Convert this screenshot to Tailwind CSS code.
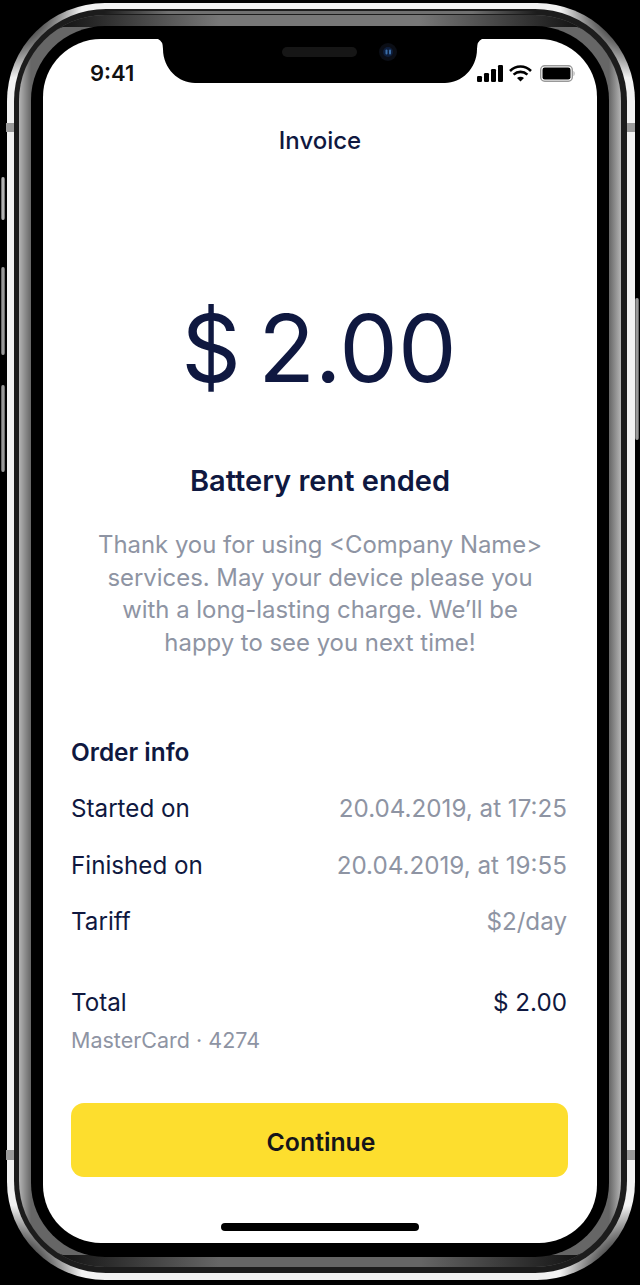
<!DOCTYPE html>
<html lang="en">
<head>
  <meta charset="UTF-8"/>
  <meta name="viewport" content="width=device-width, initial-scale=1.0"/>
  <title>Invoice</title>
  <script src="https://cdn.jsdelivr.net/npm/@tailwindcss/browser@4"></script>
</head>
<body class="bg-black">
  <div class="relative w-[640px] h-[1285px] bg-black pt-[3px] pb-[5px] pl-[7px] pr-[5px] overflow-hidden font-['Inter',sans-serif]">
    <!-- side buttons -->
    <div class="absolute left-[1px] top-[177px] w-[4px] h-[43px] rounded-[2px] bg-[linear-gradient(to_right,#555,#d0d0d0,#555)]"></div>
    <div class="absolute left-[1px] top-[267px] w-[4px] h-[88px] rounded-[2px] bg-[linear-gradient(to_right,#555,#b0b0b0,#555)]"></div>
    <div class="absolute left-[1px] top-[385px] w-[4px] h-[87px] rounded-[2px] bg-[linear-gradient(to_right,#555,#b0b0b0,#555)]"></div>
    <div class="absolute right-[1px] top-[298px] w-[4px] h-[142px] rounded-[2px] bg-[linear-gradient(to_right,#555,#b0b0b0,#555)]"></div>

    <!-- steel band -->
    <div class="relative w-full h-full rounded-[98px] bg-[radial-gradient(circle_at_0_0,#000_22px,transparent_75px),radial-gradient(circle_at_100%_0,#000_22px,transparent_75px),radial-gradient(circle_at_0_100%,#000_22px,transparent_75px),radial-gradient(circle_at_100%_100%,#000_22px,transparent_75px),linear-gradient(#f2f2f2,#f2f2f2)] pt-[6px] pb-[7px] pl-[7px] pr-[8px]">
      <div class="absolute left-[-1px] top-[120px] w-[8px] h-[9px] bg-[#9a9a9a]"></div>
      <div class="absolute right-0 top-[120px] w-[8px] h-[9px] bg-[#9a9a9a]"></div>
      <div class="absolute left-[-1px] top-[1147px] w-[8px] h-[10px] bg-[#9a9a9a]"></div>
      <div class="absolute right-0 top-[1147px] w-[8px] h-[10px] bg-[#9a9a9a]"></div>

      <div class="relative w-full h-full rounded-[92px] bg-[#1c1c1c] pt-[6px] pb-[6px] pl-[5px] pr-[6px]">
        <!-- thin highlight line along the top -->
        <div class="absolute left-[90px] right-[90px] top-[2px] h-[3px] bg-[linear-gradient(to_right,#1c1c1c,#707070_15%,#707070_85%,#1c1c1c)]"></div>

        <!-- inner grey band -->
        <div class="relative w-full h-full rounded-[86px] overflow-hidden bg-[linear-gradient(to_right,#b4b4b4_0,#666_12px,#666_590px,#b4b4b4_602px)] pt-[11px] pb-[10px] px-[12px]">
          <div class="absolute left-0 top-0 w-full h-[30px] [clip-path:polygon(0_28px,44px_12px,558px_12px,602px_28px,602px_0,0_0)] bg-[linear-gradient(to_right,#141414_44px,#777_200px,#777_400px,#141414_558px)]"></div>
          <div class="absolute left-0 bottom-0 w-full h-[30px] [clip-path:polygon(0_2px,44px_18px,558px_18px,602px_2px,602px_30px,0_30px)] bg-[linear-gradient(to_right,#141414_44px,#666_200px,#666_400px,#141414_558px)]"></div>

          <div class="relative w-full h-full rounded-[74px] bg-black pt-[13px] pb-[14px] px-[12px]">

            <!-- screen -->
            <div class="relative flex flex-col w-full h-full rounded-[58px] bg-white overflow-hidden text-[#0f1840]">
              <!-- notch -->
              <svg class="absolute left-[115px] top-0" width="324" height="44" viewBox="0 0 324 44">
                <path d="M0 0 H324 Q319 2 319 10 C319 30 303 44 287 44 H37 C21 44 5 30 5 10 Q5 2 0 0 Z" fill="#000"/>
                <rect x="124" y="8" width="75" height="10" rx="5" fill="#161616"/>
                <circle cx="230" cy="13" r="9" fill="#0b0e16"/>
                <circle cx="230" cy="13" r="5" fill="#0e1e3c"/>
                <rect x="227.5" y="10.5" width="2" height="5" rx="1" fill="#3b6ea8"/>
                <rect x="231" y="10.5" width="2" height="5" rx="1" fill="#3b6ea8"/>
              </svg>

              <!-- status bar -->
              <div class="flex items-center justify-between h-[68px] pl-[47px] pr-[22px]">
                <span class="text-[22px] font-semibold text-[#111] leading-none">9:41</span>
                <div class="flex items-center">
                  <svg width="26" height="17" viewBox="0 0 26 17" fill="#000">
                    <rect x="0" y="11" width="5" height="6" rx="1.2"/>
                    <rect x="7" y="8" width="5" height="9" rx="1.2"/>
                    <rect x="14" y="4" width="5" height="13" rx="1.2"/>
                    <rect x="21" y="0" width="5" height="17" rx="1.2"/>
                  </svg>
                  <svg class="ml-[6px]" width="23" height="17" viewBox="0 0 23 17" fill="none" stroke="#000" stroke-width="2.6">
                    <path d="M1 6 C7 0 16 0 22 6"/>
                    <path d="M4.6 9.6 C8.6 6 14.4 6 18.4 9.6"/>
                    <path d="M11.5 16.5 L8 13 C10 11.4 13 11.4 15 13 Z" fill="#000" stroke="none"/>
                  </svg>
                  <svg class="ml-[8px]" width="35" height="17" viewBox="0 0 35 17">
                    <rect x="0.7" y="0.7" width="31.6" height="15.6" rx="4" fill="none" stroke="#999" stroke-width="1.4"/>
                    <rect x="2.5" y="2.5" width="28" height="12" rx="2.2" fill="#000"/>
                    <path d="M33.5 6 C35 6.5 35 10.5 33.5 11 Z" fill="#aaa"/>
                  </svg>
                </div>
              </div>

              <h1 class="text-center text-[24px] leading-[30px] font-medium mt-[19px]">Invoice</h1>

              <div class="text-center text-[93px] leading-[110px] font-normal mt-[137px] pr-[2px] [word-spacing:-9px]">$ 2.00</div>

              <h2 class="text-center text-[29px] leading-[34px] font-semibold mt-[61px]">Battery rent ended</h2>

              <p class="text-center text-[23.9px] leading-[32.5px] text-[#8e94a3] mt-[31px] px-[48px]">Thank you for using &lt;Company Name&gt; services. May your device please you with a long-lasting charge. We’ll be happy to see you next time!</p>

              <div class="mt-[78px] pl-[28px] pr-[30px]">
                <h3 class="text-[24.4px] leading-[30px] font-semibold">Order info</h3>
                <div class="flex justify-between text-[24.2px] leading-[30px] mt-[27px]">
                  <span>Started on</span><span class="text-[#8e94a3]">20.04.2019, at 17:25</span>
                </div>
                <div class="flex justify-between text-[24.2px] leading-[30px] mt-[27px]">
                  <span>Finished on</span><span class="text-[#8e94a3]">20.04.2019, at 19:55</span>
                </div>
                <div class="flex justify-between text-[24.2px] leading-[30px] mt-[26px]">
                  <span>Tariff</span><span class="text-[#8e94a3]">$2/day</span>
                </div>
                <div class="flex justify-between text-[24.2px] leading-[30px] mt-[51px]">
                  <span>Total</span><span>$ 2.00</span>
                </div>
                <div class="text-[21.5px] leading-[28px] text-[#8e94a3] mt-[8px]">MasterCard · 4274</div>
              </div>

              <button class="ml-[28px] mr-[29px] mt-[49px] h-[74px] pt-[5px] pl-[3px] rounded-[13px] bg-[#fdde2e] text-[24.8px] font-semibold text-[#15151a]">Continue</button>

              <div class="mx-auto mt-[46px] w-[198px] h-[8px] rounded-full bg-black"></div>
            </div>
          </div>
        </div>
      </div>
    </div>
  </div>
</body>
</html>
